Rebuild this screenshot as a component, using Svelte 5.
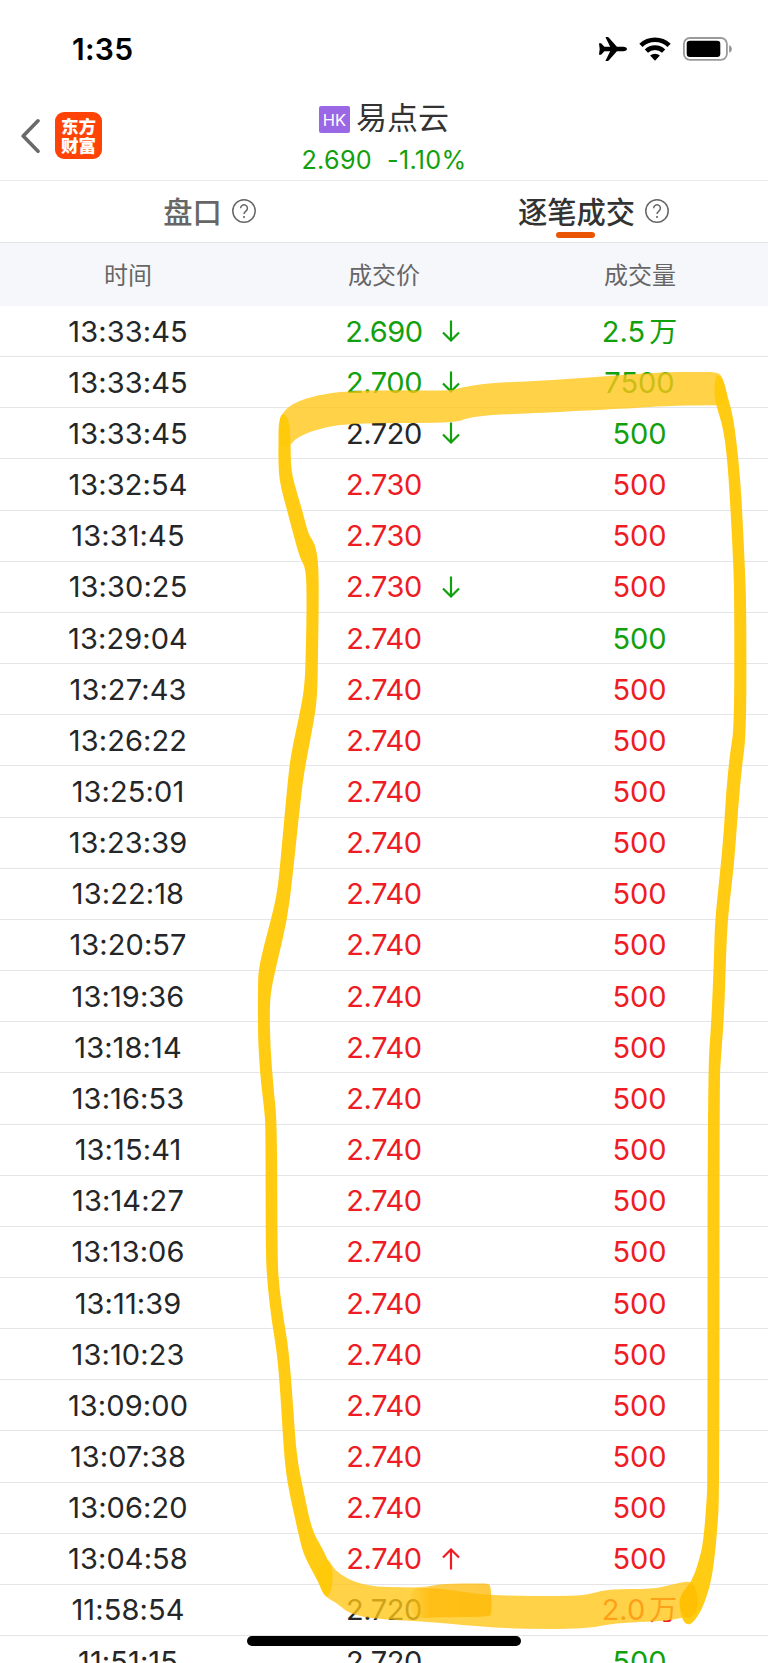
<script lang="ts">
    type Tone = "up" | "down" | "flat"
    type Point = [number, number]

    interface Trade {
        time: string
        price: string
        tone: Tone
        arrow?: "up" | "down"
        volume: string
        unit?: string
        volumeTone: Tone
    }

    const steady = (time: string): Trade => ({ time, price: "2.740", tone: "up", volume: "500", volumeTone: "up" })

    const trades: Trade[] = [
        { time: "13:33:45", price: "2.690", tone: "down", arrow: "down", volume: "2.5", unit: "万", volumeTone: "down" },
        { time: "13:33:45", price: "2.700", tone: "down", arrow: "down", volume: "7500", volumeTone: "down" },
        { time: "13:33:45", price: "2.720", tone: "flat", arrow: "down", volume: "500", volumeTone: "down" },
        { time: "13:32:54", price: "2.730", tone: "up", volume: "500", volumeTone: "up" },
        { time: "13:31:45", price: "2.730", tone: "up", volume: "500", volumeTone: "up" },
        { time: "13:30:25", price: "2.730", tone: "up", arrow: "down", volume: "500", volumeTone: "up" },
        { time: "13:29:04", price: "2.740", tone: "up", volume: "500", volumeTone: "down" },
        ...[
            "13:27:43", "13:26:22", "13:25:01", "13:23:39", "13:22:18", "13:20:57",
            "13:19:36", "13:18:14", "13:16:53", "13:15:41", "13:14:27", "13:13:06",
            "13:11:39", "13:10:23", "13:09:00", "13:07:38", "13:06:20"
        ].map(steady),
        { ...steady("13:04:58"), arrow: "up" },
        { time: "11:58:54", price: "2.720", tone: "flat", volume: "2.0", unit: "万", volumeTone: "up" },
        { time: "11:51:15", price: "2.720", tone: "flat", volume: "500", volumeTone: "down" }
    ]

    const columns = ["时间", "成交价", "成交量"]

    // outlines of the highlighter strokes
    const topStroke: Point[] = [
        [278, 432], [280, 415], [293, 403], [317, 395], [347, 391], [400, 390], [450, 391], [463, 387],
        [490, 383], [537, 381], [597, 377], [660, 372], [700, 372], [718, 372], [723, 378], [728, 397], [722, 406],
        [716, 405], [663, 406], [637, 408], [537, 413], [490, 415], [467, 418], [455, 423], [350, 423], [317, 429],
        [296, 438], [290, 446], [280, 448]
    ]
    const leftStroke: Point[] = [
        [281, 412], [278.5, 430], [278.3, 470], [281, 488], [287, 510], [294, 537], [300, 558], [306, 569],
        [306.7, 600], [306, 647], [304.7, 687], [299, 717], [291.2, 753], [288.2, 777], [284.8, 813],
        [279.4, 873], [276.4, 897], [270.3, 922], [263.6, 947], [259.2, 967], [257.9, 980], [257.9, 1033],
        [259, 1057], [261, 1083], [264.3, 1110], [265.6, 1127], [265.6, 1253], [267.6, 1287], [272, 1323],
        [277, 1353], [280.4, 1393], [283.7, 1450], [287.2, 1483], [296.9, 1527], [302.7, 1552], [310, 1567],
        [318.3, 1582], [326, 1599], [332, 1590], [333, 1569], [329, 1563], [323.3, 1550], [311.7, 1530],
        [304, 1493], [296.6, 1457], [293.2, 1407], [288.8, 1350], [283.7, 1320], [278.7, 1283], [277.4, 1253],
        [277.1, 1123], [273.7, 1090], [270.3, 1047], [269.6, 1010], [271, 990], [277, 963], [287.2, 920],
        [292.2, 880], [301.3, 793], [305, 767], [314.7, 717], [317.4, 693], [318, 653], [318.8, 600],
        [318.5, 565], [316, 548], [313, 541], [308, 533], [303, 513], [297, 493], [290.8, 470], [290.8, 443], [289, 418]
    ]
    const rightStroke: Point[] = [
        [716, 374], [722, 377], [726.7, 393], [733.3, 417], [738.3, 457], [741.7, 500], [745, 570], [746.4, 610],
        [746.4, 733], [741.8, 767], [737.7, 813], [734.3, 863], [728.3, 913], [726.3, 947], [724.3, 1013],
        [721, 1057], [719.5, 1080], [719.5, 1493], [717.3, 1530], [714, 1563], [710, 1587], [701.7, 1610],
        [693, 1623], [686.7, 1625], [682, 1619], [679, 1605], [680, 1596], [692, 1581], [698.3, 1563],
        [703.3, 1543], [706.7, 1500], [707.5, 1480], [707.5, 1075], [711.5, 1020], [714, 957], [715, 920],
        [720, 873], [724, 830], [726, 793], [730, 753], [734.3, 727], [734.3, 600], [733.3, 563], [730, 500],
        [727.3, 460], [723.3, 428], [716, 405], [714, 390]
    ]
    const bottomStroke: Point[] = [
        [327, 1556], [334, 1570], [353, 1582], [377, 1587], [400, 1587], [430, 1588], [453, 1590], [490, 1596],
        [580, 1596], [593, 1593], [610, 1589], [653, 1589], [670, 1585], [693, 1580], [698, 1594], [699, 1612],
        [690, 1616], [667, 1621], [613, 1623], [587, 1629], [513, 1629], [463, 1625], [430, 1622], [380, 1619],
        [363, 1617], [347, 1612], [337, 1603], [325, 1597], [319, 1585], [316, 1570]
    ]
    const joinStroke: Point[] = [
        [410, 1587], [427, 1587], [443, 1583.5], [480, 1583.5], [489, 1583.5], [491, 1588], [492, 1613], [489, 1617],
        [443, 1617], [410, 1619]
    ]
    const endStroke: Point[] = [
        [684, 1590], [692, 1581], [697, 1592], [698, 1608], [692, 1618], [684, 1618], [680, 1608], [680, 1597]
    ]

    // rounds the corners of an outline through the midpoints of its sides
    function outline(points: Point[]): string {
        const mid = (a: Point, b: Point) => `${(a[0] + b[0]) / 2} ${(a[1] + b[1]) / 2}`
        const last = points[points.length - 1]
        let d = `M${mid(last, points[0])}`
        points.forEach((p, i) => {
            d += `Q${p[0]} ${p[1]} ${mid(p, points[(i + 1) % points.length])}`
        })
        return d + "Z"
    }
</script>

{#snippet help()}
    <svg class="help" viewBox="0 0 24 24">
        <circle cx="12" cy="12" r="11.2" />
        <path d="M8.6 9.200a3.400 3.400 0 1 1 5.500 2.700c-1.300 1-2.100 1.500-2.100 3.100" />
        <circle class="dot" cx="12" cy="18" r="1.1" />
    </svg>
{/snippet}

<div class="screen">
    <div class="status">
        <span class="clock">1:35</span>
        <div class="status-icons">
            <svg width="28" height="24" viewBox="0 0 28 24">
                <path d="M.4 6.200h1.700l3.300 3.600 5.800-.1L6.600.6C6.400.2 6.600 0 7 0h1.500c.5 0 .9.200 1.200.5l8.200 9.200h6.600c2.100 0 3.500 1.100 3.500 2.300s-1.400 2.300-3.500 2.300h-6.600l-8.200 9.200c-.3.300-.7.500-1.200.5H7c-.4 0-.6-.2-.4-.6l4.600-9.100-5.800-.1-3.300 3.600H.4c-.3 0-.4-.2-.4-.4L.7 12 0 6.600c0-.2.1-.4.4-.4z" />
            </svg>
            <svg width="32" height="24" viewBox="0 0 32 24">
                <path class="wave" d="M1.900 8.400a20.400 20.400 0 0 1 28.200 0" />
                <path class="wave" d="M7.400 14.100a12.400 12.400 0 0 1 17.200 0" />
                <path d="M11.100 18.600a7.400 7.400 0 0 1 9.800 0L16 23.700z" />
            </svg>
            <svg width="50" height="24" viewBox="0 0 50 24">
                <rect class="case" x=".9" y="1" width="43" height="21.8" rx="6" />
                <rect x="3.7" y="3.8" width="33.6" height="16.2" rx="3.2" />
                <path class="nub" d="M46.200 8.200c1.500.5 2.600 2 2.600 3.700s-1.100 3.200-2.600 3.700z" />
            </svg>
        </div>
    </div>

    <header>
        <div class="nav">
            <svg class="back" width="20" height="36" viewBox="0 0 20 36">
                <path d="M18 2.800 3.200 18 18 33.200" />
            </svg>
            <div class="logo"><span>东方</span><span>财富</span></div>
        </div>
        <div class="stock">
            <div class="name"><span class="market">HK</span><span>易点云</span></div>
            <div class="quote"><span>2.690</span><span>-1.10%</span></div>
        </div>
    </header>

    <div class="tabs">
        <div class="tab"><span>盘口</span>{@render help()}</div>
        <div class="tab active"><span>逐笔成交</span>{@render help()}</div>
    </div>

    <div class="row head">
        {#each columns as column}
            <span>{column}</span>
        {/each}
    </div>

    <div class="list">
        {#each trades as trade}
            <div class="row">
                <span class="time">{trade.time}</span>
                <span class="price {trade.tone}">
                    {trade.price}
                    {#if trade.arrow}
                        <svg class="arrow {trade.arrow}" viewBox="0 0 18 22">
                            {#if trade.arrow == "down"}
                                <path d="M9 .5v20M1 12.500l8 8 8-8" />
                            {:else}
                                <path d="M9 21.500v-20M1 9.500l8-8 8 8" />
                            {/if}
                        </svg>
                    {/if}
                </span>
                <span class="volume {trade.volumeTone}">{trade.volume}{#if trade.unit}<i>{trade.unit}</i>{/if}</span>
            </div>
        {/each}
    </div>

    <svg class="marker" viewBox="0 0 768 1663">
        <defs>
            <linearGradient id="join" x1="0" x2="1">
                <stop offset="0" stop-color="#ffb700" stop-opacity="0.1" />
                <stop offset="0.25" stop-color="#ffb700" stop-opacity="0.7" />
                <stop offset="1" stop-color="#ffb700" stop-opacity="0.75" />
            </linearGradient>
        </defs>
        <path class="wide" d={outline(topStroke)} />
        <path class="wide" d={outline(bottomStroke)} />
        <path fill="url(#join)" d={outline(joinStroke)} />
        <path class="thin" d={outline(leftStroke)} />
        <path class="thin" d={outline(rightStroke)} />
        <path class="end" d={outline(endStroke)} />
    </svg>
    <div class="home-bar"></div>
</div>

<style>
    .screen {
        position: relative;
        display: flex;
        flex-direction: column;
        width: 768px;
        height: 1663px;
        overflow: hidden;
        background: #fff;
        color: #242628;
        font-family: Inter, "Noto Sans CJK SC", sans-serif;
    }
    .screen > * {
        flex-shrink: 0;
    }

    .status {
        display: flex;
        justify-content: space-between;
        align-items: center;
        box-sizing: border-box;
        height: 98px;
        padding: 0 35px 0 72px;
        color: #000;
    }
    .clock {
        font-size: 30px;
        font-weight: 600;
        letter-spacing: 0.3px;
    }
    .status-icons {
        display: flex;
        gap: 12px;
    }
    .wave {
        fill: none;
        stroke: #000;
        stroke-width: 4.6;
    }
    .case {
        fill: none;
        stroke: #9a9a9c;
        stroke-width: 1.8;
    }
    .nub {
        fill: #8e8e90;
    }

    header {
        display: grid;
        grid-template-columns: 1fr auto 1fr;
        box-sizing: border-box;
        height: 83px;
        border-bottom: 1px solid #ebebed;
    }
    .nav {
        display: flex;
        align-items: center;
        gap: 15px;
        padding: 0 0 8px 20px;
    }
    .back {
        fill: none;
        stroke: #6a6a6a;
        stroke-width: 3.6;
        stroke-linecap: round;
        stroke-linejoin: round;
    }
    .logo {
        display: flex;
        flex-direction: column;
        align-items: center;
        justify-content: center;
        width: 47px;
        height: 47px;
        border-radius: 9px;
        background: #ff4306;
        color: #fff;
        font-size: 17.5px;
        font-weight: 900;
        line-height: 19px;
    }
    .stock {
        display: flex;
        flex-direction: column;
        align-items: center;
    }
    .name {
        display: flex;
        align-items: center;
        gap: 6px;
        height: 42px;
        color: #333;
        font-size: 31px;
        line-height: 40px;
    }
    .name > span:last-child {
        padding-bottom: 3px;
    }
    .market {
        width: 31px;
        height: 27px;
        border-radius: 2px;
        background: #9b68e5;
        color: #fff;
        font-size: 16.5px;
        line-height: 28px;
        text-align: center;
    }
    .quote {
        display: flex;
        gap: 15px;
        color: #12a00c;
        font-size: 25.2px;
        letter-spacing: 0.3px;
        line-height: 41px;
    }

    .tabs {
        display: grid;
        grid-template-columns: 1fr 1fr;
        box-sizing: border-box;
        height: 62px;
        border-bottom: 1px solid #e4e5ea;
    }
    .tab {
        position: relative;
        display: flex;
        align-items: center;
        justify-content: center;
        gap: 10px;
        padding: 0 0 2px 35px;
        color: #666;
        font-size: 29.3px;
        font-weight: 500;
    }
    .tab span {
        padding-bottom: 2px;
    }
    .active {
        color: #333;
    }
    .active::after {
        content: "";
        position: absolute;
        bottom: 4px;
        left: 172px;
        width: 39px;
        height: 6px;
        border-radius: 3px;
        background: #ea5504;
    }
    .help {
        width: 24px;
        height: 24px;
        fill: none;
        stroke: #666;
        stroke-width: 1.5;
    }
    .help .dot {
        fill: #666;
        stroke: none;
    }

    .row {
        display: grid;
        grid-template-columns: repeat(3, 1fr);
        align-items: center;
        box-sizing: border-box;
        height: 51.17px;
        border-bottom: 1px solid #e4e5e8;
        font-size: 29px;
        text-align: center;
    }
    .head {
        height: 63px;
        padding-bottom: 2px;
        border: none;
        background: #f6f7fa;
        color: #666;
        font-size: 24px;
    }
    .list {
        display: flex;
        flex-direction: column;
    }
    .time {
        letter-spacing: 0.1px;
    }
    .price {
        position: relative;
        letter-spacing: -0.4px;
    }
    .up {
        color: #ee1c24;
    }
    .down {
        color: #12a00c;
    }
    .flat {
        color: #242628;
    }
    .volume {
        padding-right: 1px;
    }
    .volume i {
        margin-left: 4px;
        font-size: 28px;
        font-style: normal;
        line-height: 1;
    }
    .arrow {
        position: absolute;
        top: 50%;
        left: 186px;
        width: 18px;
        height: 22px;
        margin-top: -11px;
        fill: none;
        stroke: currentColor;
        stroke-width: 2.2;
    }
    .arrow.down {
        color: #12a00c;
    }

    .marker {
        position: absolute;
        top: 0;
        left: 0;
        width: 768px;
        height: 1663px;
        filter: blur(0.6px);
    }
    .wide {
        fill: #ffc514;
        fill-opacity: 0.78;
    }
    .thin {
        fill: #ffc906;
        fill-opacity: 0.95;
    }
    .end {
        fill: #ffb700;
        fill-opacity: 0.6;
    }
    .home-bar {
        position: absolute;
        bottom: 17px;
        left: 247px;
        width: 274px;
        height: 10px;
        border-radius: 5px;
        background: #000;
    }
</style>
